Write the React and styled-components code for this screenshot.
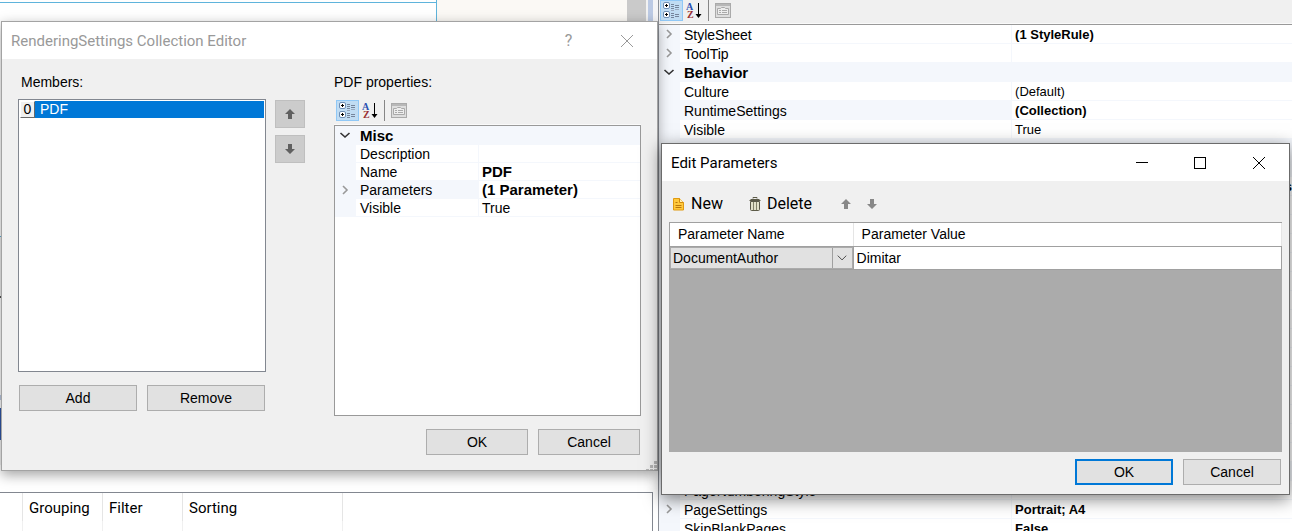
import React, { useState } from 'react';
import styled, { createGlobalStyle, css } from 'styled-components';

const ui = 'Roboto, "Noto Sans", sans-serif';
const sans = '"Liberation Sans", Arial, sans-serif';

const GlobalStyle = createGlobalStyle`
  * {
    box-sizing: border-box;
  }
  body {
    margin: 0;
    overflow: hidden;
    background: #fff;
    color: #000;
    font-family: ${sans};
    font-size: 14px;
    line-height: 16px;
  }
  button, select, input {
    font: inherit;
    color: inherit;
  }
`

const Desktop = styled.main`
  display: grid;
  grid-template-columns: 658fr 634fr;
  height: 100vh;
  overflow: hidden;
`

const Pane = styled.section`
  position: relative;
  min-width: 0;
  height: 100vh;
`

const PaneContent = styled.div`
  display: flex;
  flex-direction: column;
  height: 100%;
  overflow: hidden;
  ${(props) => props.$edge && css`
    border-left: 1px solid #8c9098;
  `}
`

/* designer behind the left dialog */
const Surface = styled.div`
  flex: 1;
  min-height: 0;
  display: flex;
  flex-direction: column;
`

const SurfaceTop = styled.div`
  display: flex;
  height: 237px;
  border-bottom: 1px solid #5fb0d8;
  background: #fbf9f5;
`

const Page = styled.div`
  flex: 437;
  display: flex;
  flex-direction: column;
  background: #fff;
  border-right: 1px solid #5fb4dc;
  &::before {
    content: '';
    height: 2px;
    border-bottom: 1px solid #5fb4dc;
  }
`

const Margin = styled.div`
  flex: 190;
`

const Scroll = styled.div`
  width: 19px;
  background: #cacaca;
`

const Frame = styled.div`
  width: 12px;
  background: #f4f4f6;
  border-left: 2px solid #f2f2f2;
  &::before {
    content: '';
    display: block;
    width: 5px;
    height: 100%;
    background: #bccae4;
  }
`

const Band = styled.div`
  height: ${(props) => props.$size}px;
  background: ${(props) => props.$color};
`

const Groups = styled.div`
  height: 39px;
  margin-right: 5px;
  border-top: 1px solid #828790;
  border-right: 1px solid #828790;
  background: #fff;
  overflow: hidden;
`

const GroupTable = styled.table`
  border-spacing: 0;
  table-layout: fixed;
  width: 343px;
  font-family: ${ui};
  font-size: 15px;
  line-height: 20px;
  th {
    height: 28px;
    padding: 2px 0 0 6px;
    font-weight: 400;
    text-align: left;
    border-right: 1px solid #e5e5e5;
  }
  td {
    height: 14px;
    padding: 0;
    border-right: 1px solid #f0f0f0;
  }
`

const Tools = styled.div`
  display: flex;
  align-items: center;
  height: ${(props) => (props.$compact ? 24 : 26)}px;
  flex: none;
  padding: ${(props) => (props.$compact ? '0 2px 3px 1px' : '0 2px 2px')};
  background: #f0f0f0;
  border-bottom: 1px solid #fafafa;
`

const ToolButton = styled.button`
  display: flex;
  align-items: center;
  justify-content: center;
  width: 23px;
  height: 21px;
  padding: 0;
  border: 1px solid ${(props) => (props.$active ? '#90c8f6' : 'transparent')};
  background: ${(props) => (props.$active ? '#c0dcf3' : 'transparent')};
`

const ToolLine = styled.span`
  width: 1px;
  height: 21px;
  margin: 0 2px;
  background: #868686;
`

const GridBox = styled.div`
  flex: 1;
  min-height: 0;
  background: #fff;
  border: solid #999;
  border-width: ${(props) => (props.$framed ? '1px' : '1px 0 0')};
  overflow: hidden;
`

const PropertyTable = styled.table`
  width: 100%;
  table-layout: fixed;
  border-collapse: separate;
  border-spacing: 0;
`

const PropertyRow = styled.tr`
  td, th {
    height: ${(props) => props.$height}px;
    padding: 1px 0 0 4px;
    line-height: 16px;
    font-weight: 400;
    text-align: left;
    white-space: nowrap;
    overflow: hidden;
    border-bottom: 1px solid #f4f7fc;
  }
  th {
    background: ${(props) => (props.$shaded ? '#f4f7fc' : 'transparent')};
  }
`

const Gutter = styled.td`
  background: #f4f7fc;
  && {
    padding: 0 2px 0 0;
  }
  svg {
    display: block;
    margin: 0 auto;
  }
`

const Category = styled.th`
  && {
    height: ${(props) => props.$height}px;
    padding-top: 2px;
    font-size: 15px;
    font-weight: 700;
    background: #f4f7fc;
  }
`

const Value = styled.td`
  border-left: 1px solid #f4f7fc;
  && {
    padding-left: 3px;
    font-size: ${(props) => props.$size}px;
    font-weight: ${(props) => (props.$bold ? 700 : 400)};
    text-align: ${(props) => (props.$end ? 'right' : 'left')};
  }
`

/* windows */
const Window = styled.section`
  position: absolute;
  display: flex;
  flex-direction: column;
  background: #f0f0f0;
  border: 1px solid #a3a3a3;
  top: 21px;
  bottom: 60px;
  left: 1px;
  right: 0;
  z-index: 1;
  box-shadow: 0 4px 12px rgba(0, 0, 0, 0.36);
  ${(props) => props.$front && css`
    top: 143px;
    bottom: 36px;
    left: 3px;
    right: 2px;
    z-index: 2;
    border-color: #6b6b6b;
    box-shadow: 0 4px 16px rgba(0, 0, 0, 0.5);
  `}
`

const TitleBar = styled.header`
  display: flex;
  align-items: center;
  height: 37px;
  flex: none;
  padding: 0 1px 0 9px;
  background: #fff;
  color: ${(props) => (props.$dim ? '#999' : '#000')};
`

const Title = styled.h1`
  flex: 1;
  margin: 0;
  font-family: ${ui};
  font-size: 15px;
  line-height: 20px;
  font-weight: 400;
`

const Caption = styled.button`
  width: ${(props) => (props.$wide ? 59 : 57)}px;
  height: 36px;
  padding: 0;
  display: flex;
  align-items: center;
  justify-content: center;
  border: 0;
  background: transparent;
  color: inherit;
  font-family: ${ui};
  font-size: 16px;
`

const EditorBody = styled.div`
  flex: 1;
  min-height: 0;
  display: grid;
  grid-template-columns: 248fr 68px 307fr;
  padding: 15px 16px 0;
`

const Column = styled.div`
  display: flex;
  flex-direction: column;
  min-width: 0;
  min-height: 0;
`

const Label = styled.div`
  height: 25px;
  padding-left: ${(props) => (props.$indent ? 3 : 0)}px;
`

const List = styled.ul`
  flex: 1;
  margin: 0;
  padding: 1px;
  list-style: none;
  background: #fff;
  border: 1px solid #828790;
`

const Member = styled.li`
  display: flex;
  height: 17px;
  color: #fff;
  background: #0078d7;
`

const Index = styled.span`
  width: 15px;
  text-align: center;
  color: #000;
  background: #f0f0f0;
  border: 1px solid;
  border-color: #fff #696969 #696969 #fff;
  line-height: 15px;
  margin-right: 5px;
`

const Arrows = styled.div`
  display: flex;
  flex-direction: column;
  gap: 7px;
  padding: 26px 0 0 9px;
`

const ArrowButton = styled.button`
  width: 30px;
  height: 28px;
  padding: 0;
  display: flex;
  align-items: center;
  justify-content: center;
  background: #ccc;
  border: 1px solid #bfbfbf;
`

const Pair = styled.div`
  display: grid;
  grid-template-columns: 1fr 1fr;
  gap: 10px;
  padding: 13px 1px 5px;
`

const Footer = styled.footer`
  display: flex;
  justify-content: flex-end;
  gap: 10px;
  padding: ${(props) => props.$pad};
`

const PushButton = styled.button`
  width: ${(props) => props.$width || '100%'};
  height: 26px;
  padding: 0;
  background: #e1e1e1;
  border: ${(props) => (props.$primary ? '2px solid #0078d7' : '1px solid #adadad')};
`

const Grip = styled.svg`
  position: absolute;
  right: 0;
  bottom: 0;
`

const Commands = styled.div`
  display: flex;
  align-items: center;
  height: 41px;
  padding: 4px 0 0 10px;
  font-family: ${ui};
  font-size: 16px;
  line-height: 20px;
`

const Command = styled.button`
  display: flex;
  align-items: center;
  gap: 6px;
  height: 26px;
  padding: 0;
  margin-right: ${(props) => props.$gap}px;
  border: 0;
  background: transparent;
`

const Sheet = styled.div`
  flex: 1;
  margin: 0 7px;
  background: #ababab;
  border-top: 1px solid #a0a0a0;
`

const SheetTable = styled.table`
  width: 100%;
  table-layout: fixed;
  border-spacing: 0;
  border-left: 1px solid #a0a0a0;
  th {
    height: 23px;
    padding: 0 0 1px 8px;
    font-weight: 400;
    text-align: left;
    background: #fff;
    border-right: 1px solid #e5e5e5;
  }
  td {
    height: 24px;
    padding: 0;
    background: #fff;
    border: solid #a0a0a0;
    border-width: 1px 1px 1px 0;
  }
`

const Combo = styled.div`
  display: flex;
  position: relative;
  border: 1px solid #ababab;
  background: #e1e1e1;
  svg {
    position: absolute;
    right: 0;
    top: 0;
    pointer-events: none;
    border-left: 1px solid #a0a0a0;
  }
`

const Select = styled.select`
  appearance: none;
  flex: 1;
  height: 20px;
  padding: 0 20px 0 2px;
  border: 0;
  border-radius: 0;
  background: transparent;
`

const CellInput = styled.input`
  width: 100%;
  height: 20px;
  padding: 0 3px;
  border: 0;
  outline: 0;
  background: transparent;
`

const Chevron = ({ open }) => (
  <svg width="12" height="12" viewBox="0 0 12 12" fill="none" strokeWidth="1.6">
    {open
      ? <path d="M1.5 4 L6 8 L10.5 4" stroke="#333" />
      : <path d="M4 2 L8 6 L4 10" stroke="#999" />}
  </svg>
)

const CategorizedIcon = () => (
  <svg width="17" height="17" viewBox="0 0 17 17">
    {[0, 9].map((y) => (
      <g key={y}>
        <rect x="0.5" y={y + 0.5} width="6" height="6" rx="1.5" fill="#fff" stroke="#6f8fb5" />
        <path d={`M2 ${y + 3.5} h3 M3.5 ${y + 2} v3`} stroke="#000" />
        <path d={`M8 ${y + 2.5} h3 M8 ${y + 4.5} h3 M8 ${y + 6.5} h3`} stroke="#75849b" />
        <path d={`M12 ${y + 3.5} h4 M12 ${y + 5.5} h4`} stroke="#75849b" />
      </g>
    ))}
    <path d="M8 8.5 h3 M12 7.5 h4" stroke="#9aa9bf" />
  </svg>
)

const SortIcon = () => (
  <svg width="17" height="17" viewBox="0 0 17 17">
    <text x="0" y="8" fontFamily="Liberation Serif" fontSize="10" fontWeight="700" fill="#2b50b0">A</text>
    <text x="1" y="16" fontFamily="Liberation Serif" fontSize="10" fontWeight="700" fill="#9a2f33">Z</text>
    <path d="M12 1 h1 v11 h2.5 L12.5 16 L9.5 12 h2.5 z" fill="#000" />
  </svg>
)

const PagesIcon = () => (
  <svg width="16" height="15" viewBox="0 0 16 15" fill="none" stroke="#aaa">
    <rect x="0.5" y="0.5" width="15" height="14" fill="#dedede" />
    <path d="M1 2 h14" stroke="#b8b8b8" strokeWidth="2" />
    <path d="M2.5 11.5 v-6 h3 l1 -1 h3 l1 1 h3 v6 z" fill="#eee" />
    <path d="M4 7.5 h2 M7 7.5 h5 M4 9.5 h2 M7 9.5 h5" />
  </svg>
)

const ArrowIcon = ({ down, color = '#606060' }) => (
  <svg width="12" height="12" viewBox="0 0 12 12">
    <path
      d={down ? 'M4 1 h4 v5 h3 L6 11 L1 6 h3 z' : 'M4 11 h4 v-5 h3 L6 1 L1 6 h3 z'}
      fill={color}
    />
  </svg>
)

const NewIcon = () => (
  <svg width="13" height="14" viewBox="0 0 13 14">
    <path d="M1.5 1.5 h6 l4 4 v7.5 h-10 z" fill="#ffc93c" stroke="#e09a10" />
    <path d="M7.5 1.5 v4 h4" fill="#fff0b8" stroke="#d38b0c" />
    <path d="M3.5 5.5 h2 M3.5 8.5 h6 M3.5 10.5 h6" stroke="#b9770c" />
  </svg>
)

const TrashIcon = () => (
  <svg width="12" height="14" viewBox="0 0 12 14" fill="none" stroke="#5c5b48">
    <path d="M1.5 4.5 h9 v8 q0 1 -1 1 h-7 q-1 0 -1 -1 z" fill="#e4e3c9" />
    <path d="M0.5 3.5 h11 M1.5 2.5 h9" />
    <path d="M4 1.5 v-1 h4 v1" />
    <path d="M4.5 5 v8 M7.5 5 v8" stroke="#85846a" />
  </svg>
)

const CloseIcon = () => (
  <svg width="14" height="14" viewBox="0 0 14 14" fill="none" stroke="currentColor">
    <path d="M1 1 L13 13 M13 1 L1 13" />
  </svg>
)

const Toolbar = ({ compact }) => (
  <Tools $compact={compact}>
    <ToolButton $active aria-label="Categorized"><CategorizedIcon /></ToolButton>
    <ToolButton aria-label="Alphabetical"><SortIcon /></ToolButton>
    <ToolLine />
    <ToolButton aria-label="Property pages" disabled><PagesIcon /></ToolButton>
  </Tools>
)

const PropertyGrid = ({ rows, height, nameWidth, valueSize, boldSize }) => (
  <PropertyTable>
    <colgroup>
      <col style={{ width: '21px' }} />
      <col style={{ width: nameWidth }} />
      <col />
    </colgroup>
    <tbody>
      {rows.map((row, index) => (
        <PropertyRow key={index} $height={height} $shaded={row.shaded}>
          <Gutter>{row.expand && <Chevron open={row.expand === 'open'} />}</Gutter>
          {row.category ? (
            <Category colSpan={2} $height={19}>{row.name}</Category>
          ) : (
            <>
              <th scope="row">{row.name}</th>
              <Value $bold={row.bold} $end={row.end} $size={row.bold ? boldSize : valueSize}>
                {row.value}
              </Value>
            </>
          )}
        </PropertyRow>
      ))}
    </tbody>
  </PropertyTable>
)

const blank = (count) => Array.from({ length: count }, () => ({ name: '' }));

const reportRows = [
  { name: 'StyleSheet', value: '(1 StyleRule)', bold: true, expand: 'closed' },
  { name: 'ToolTip', expand: 'closed' },
  { name: 'Behavior', category: true, expand: 'open' },
  { name: 'Culture', value: '(Default)' },
  { name: 'RuntimeSettings', value: '(Collection)', bold: true, shaded: true },
  { name: 'Visible', value: 'True' },
  { name: '', category: true },
  { name: '', category: true },
  { name: '', value: 's', bold: true, end: true },
  ...blank(14),
  { name: '', category: true },
  { name: 'PageNumberingStyle', value: 'Continue' },
  { name: 'PageSettings', value: 'Portrait; A4', bold: true, expand: 'closed' },
  { name: 'SkipBlankPages', value: 'False', bold: true },
];

const pdfRows = [
  { name: 'Misc', category: true, expand: 'open' },
  { name: 'Description' },
  { name: 'Name', value: 'PDF', bold: true },
  { name: 'Parameters', value: '(1 Parameter)', bold: true, expand: 'closed', shaded: true },
  { name: 'Visible', value: 'True' },
];

const CollectionEditor = () => (
  <Window aria-label="RenderingSettings Collection Editor">
    <TitleBar $dim>
      <Title>RenderingSettings Collection Editor</Title>
      <Caption aria-label="Help">?</Caption>
      <Caption aria-label="Close" $wide><CloseIcon /></Caption>
    </TitleBar>
    <EditorBody>
      <Column>
        <Label id="members" $indent>Members:</Label>
        <List aria-labelledby="members">
          <Member><Index>0</Index>PDF</Member>
        </List>
        <Pair>
          <PushButton>Add</PushButton>
          <PushButton>Remove</PushButton>
        </Pair>
      </Column>
      <Arrows>
        <ArrowButton aria-label="Move up"><ArrowIcon /></ArrowButton>
        <ArrowButton aria-label="Move down"><ArrowIcon down /></ArrowButton>
      </Arrows>
      <Column>
        <Label>PDF properties:</Label>
        <Toolbar />
        <GridBox $framed>
          <PropertyGrid rows={pdfRows} height={18} nameWidth="40%" valueSize={14} boldSize={15} />
        </GridBox>
      </Column>
    </EditorBody>
    <Footer $pad="13px 17px 15px">
      <PushButton $width="102px">OK</PushButton>
      <PushButton $width="102px">Cancel</PushButton>
    </Footer>
    <Grip width="11" height="9" viewBox="0 0 11 9" fill="#b4b4b4">
      <path d="M8 0 h3 v3 h-3 z M4 4 h3 v3 h-3 z M8 4 h3 v3 h-3 z M0 8 h3 v1 h-3 z M4 8 h3 v1 h-3 z M8 8 h3 v1 h-3 z" />
    </Grip>
  </Window>
)

const EditParameters = () => {
  const [value, setValue] = useState('Dimitar');

  return (
    <Window $front aria-label="Edit Parameters">
      <TitleBar>
        <Title>Edit Parameters</Title>
        <Caption aria-label="Minimize">
          <svg width="12" height="12"><path d="M0 5.5 h12" stroke="#000" /></svg>
        </Caption>
        <Caption aria-label="Maximize" $wide>
          <svg width="12" height="12"><rect x="0.5" y="0.5" width="11" height="11" fill="none" stroke="#000" /></svg>
        </Caption>
        <Caption aria-label="Close" $wide><CloseIcon /></Caption>
      </TitleBar>
      <Commands>
        <Command $gap={26}><NewIcon />New</Command>
        <Command $gap={28}><TrashIcon />Delete</Command>
        <Command $gap={14} aria-label="Move up"><ArrowIcon color="#888" /></Command>
        <Command $gap={0} aria-label="Move down"><ArrowIcon down color="#888" /></Command>
      </Commands>
      <Sheet>
        <SheetTable>
          <colgroup>
            <col style={{ width: '30%' }} />
            <col />
          </colgroup>
          <thead>
            <tr>
              <th>Parameter Name</th>
              <th>Parameter Value</th>
            </tr>
          </thead>
          <tbody>
            <tr>
              <td>
                <Combo>
                  <Select aria-label="Parameter Name">
                    <option>DocumentAuthor</option>
                  </Select>
                  <svg width="20" height="20" viewBox="0 0 20 20" fill="none" stroke="#444">
                    <path d="M5 7.5 L9.5 12 L14 7.5" />
                  </svg>
                </Combo>
              </td>
              <td>
                <CellInput
                  aria-label="Parameter Value"
                  value={value}
                  onChange={(event) => setValue(event.target.value)}
                />
              </td>
            </tr>
          </tbody>
        </SheetTable>
      </Sheet>
      <Footer $pad="7px 8px 9px">
        <PushButton $width="98px" $primary>OK</PushButton>
        <PushButton $width="98px">Cancel</PushButton>
      </Footer>
    </Window>
  )
}

const App = () => {
  return (
    <>
      <GlobalStyle />
      <Desktop>
        <Pane>
          <PaneContent>
            <Surface>
              <SurfaceTop>
                <Page />
                <Margin />
                <Scroll />
                <Frame />
              </SurfaceTop>
              <Band $size={59} $color="#f0f0f0" />
              <Band $size={2} $color="#555" />
              <Band $size={97} $color="#fff" />
              <Band $size={5} $color="#bccae4" />
              <Band $size={8} $color="#fff" />
              <Band $size={32} $color="#3157a8" />
              <Band $size={25} $color="#f4f4f4" />
            </Surface>
            <Groups>
              <GroupTable>
                <colgroup>
                  <col style={{ width: '23px' }} />
                  <col style={{ width: '80px' }} />
                  <col style={{ width: '80px' }} />
                  <col style={{ width: '160px' }} />
                </colgroup>
                <thead>
                  <tr>
                    <th aria-label="Row" />
                    <th>Grouping</th>
                    <th>Filter</th>
                    <th>Sorting</th>
                  </tr>
                </thead>
                <tbody>
                  <tr><td /><td /><td /><td /></tr>
                </tbody>
              </GroupTable>
            </Groups>
          </PaneContent>
          <CollectionEditor />
        </Pane>
        <Pane>
          <PaneContent $edge>
            <Toolbar compact />
            <GridBox>
              <PropertyGrid rows={reportRows} height={19} nameWidth="52.3%" valueSize={13} boldSize={13} />
            </GridBox>
          </PaneContent>
          <EditParameters />
        </Pane>
      </Desktop>
    </>
  )
}

export default App
